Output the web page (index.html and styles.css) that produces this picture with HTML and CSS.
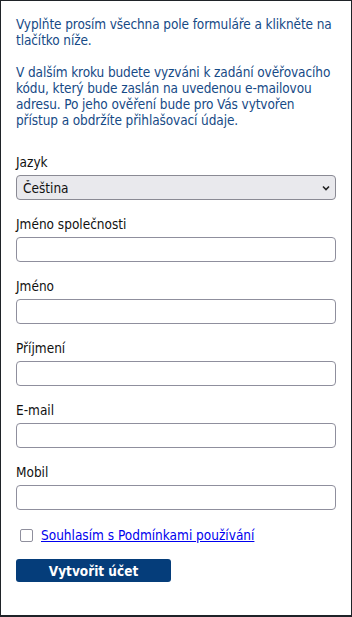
FILE: index.html
```html
<!DOCTYPE html>
<html lang="cs">
<head>
<meta charset="utf-8">
<title>Registrace</title>
<link rel="stylesheet" href="styles.css">
</head>
<body>
<div class="page">
  <p class="intro">Vyplňte prosím všechna pole formuláře a klikněte na tlačítko níže.</p>
  <p class="intro">V dalším kroku budete vyzváni k zadání ověřovacího kódu, který bude zaslán na uvedenou e-mailovou adresu. Po jeho ověření bude pro Vás vytvořen přístup a obdržíte přihlašovací údaje.</p>
  <form class="form">
    <div class="field">
      <label class="label" for="lang">Jazyk</label>
      <div class="select-wrap">
        <select id="lang" class="select">
          <option>Čeština</option>
        </select>
        <svg class="chev" width="8" height="6" viewBox="0 0 8 6"><path d="M1 1.5 L4 4.5 L7 1.5" fill="none" stroke="#222" stroke-width="1.6"/></svg>
      </div>
    </div>
    <div class="field">
      <label class="label" for="company">Jméno společnosti</label>
      <input id="company" class="input" type="text">
    </div>
    <div class="field">
      <label class="label" for="first">Jméno</label>
      <input id="first" class="input" type="text">
    </div>
    <div class="field">
      <label class="label" for="last">Příjmení</label>
      <input id="last" class="input" type="text">
    </div>
    <div class="field">
      <label class="label" for="email">E-mail</label>
      <input id="email" class="input" type="text">
    </div>
    <div class="field">
      <label class="label" for="mobile">Mobil</label>
      <input id="mobile" class="input" type="text">
    </div>
    <div class="agree">
      <span class="check"></span>
      <a class="link" href="#">Souhlasím s Podmínkami používání</a>
    </div>
    <button class="btn" type="button">Vytvořit účet</button>
  </form>
</div>
</body>
</html>
```

FILE: styles.css
```css
html, body {
  margin: 0;
  padding: 0;
  background: #ffffff;
}
body {
  font-family: "DejaVu Sans Condensed", "DejaVu Sans", sans-serif;
  font-stretch: condensed;
  font-size: 13.5px;
  line-height: 16px;
  color: #111;
}
.page {
  box-sizing: border-box;
  width: 352px;
  min-height: 617px;
  border: 1px solid #1f2328;
  border-bottom-width: 2px;
  padding: 15px 15px 20px 15px;
}
.intro {
  margin: 0 0 16px 0;
  color: #164a86;
  letter-spacing: -0.1px;
}
.form {
  display: flex;
  flex-direction: column;
  padding-top: 10px;
}
.field {
  display: flex;
  flex-direction: column;
  gap: 5px;
  margin-bottom: 16px;
}
.label {
  color: #111;
}
.select-wrap {
  position: relative;
}
.select {
  appearance: none;
  -webkit-appearance: none;
  box-sizing: border-box;
  width: 100%;
  height: 25px;
  margin: 0;
  padding: 0 6px;
  border: 1px solid #8a8a94;
  border-radius: 4px;
  background: #e9e9ed;
  font: inherit;
  color: #111;
}
.chev {
  position: absolute;
  right: 6px;
  top: 10px;
}
.input {
  box-sizing: border-box;
  width: 100%;
  height: 25px;
  margin: 0;
  padding: 0 6px;
  border: 1px solid #8f8f9d;
  border-radius: 4px;
  background: #fff;
  font: inherit;
}
.agree {
  display: flex;
  align-items: center;
  gap: 8px;
  padding-left: 4px;
  margin-top: 1px;
  height: 16px;
}
.check {
  box-sizing: border-box;
  width: 13px;
  height: 13px;
  border: 1px solid #8f8f9d;
  border-radius: 2px;
  background: #fff;
}
.link {
  color: #0000ee;
  text-decoration: underline;
}
.btn {
  box-sizing: border-box;
  align-self: flex-start;
  width: 155px;
  height: 23px;
  margin-top: 16px;
  padding: 0;
  border: none;
  border-radius: 3px;
  background: #053d7a;
  color: #fff;
  font: inherit;
  font-weight: bold;
  font-size: 13.5px;
}
```
